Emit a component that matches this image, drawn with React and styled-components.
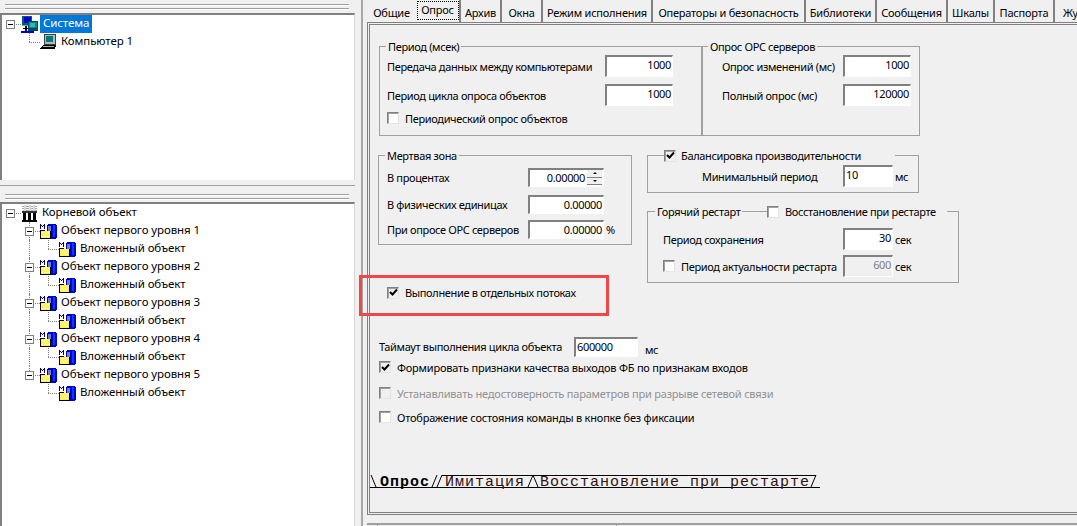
import React from 'react';
import styled, { createGlobalStyle } from 'styled-components';

const Global = createGlobalStyle`
  html, body { margin: 0; padding: 0; background: #f0f0f0; }
  body { font-family: "Noto Sans", "Liberation Sans", sans-serif; font-size: 11px; letter-spacing: -0.35px; color: #000; }
  * { box-sizing: border-box; }
`;

const Window = styled.div`
  display: flex;
  width: 1077px;
  height: 526px;
  overflow: hidden;
  background: #f0f0f0;
`;
const LeftColumn = styled.div`
  display: flex;
  flex-direction: column;
  width: 357px;
  flex: none;
  padding-right: 2px;
`;
const Grip = styled.div`
  height: ${p => p.$h}px;
  flex: none;
  padding: ${p => p.$top}px 6px 0 5px;
  &::before, &::after {
    content: '';
    display: block;
    height: 2px;
    margin-bottom: 2px;
    background: linear-gradient(#a0a0a0 50%, #fff 50%);
  }
`;
const TreePanel = styled.div`
  height: ${p => p.$h}px;
  flex: none;
  background: #fff;
  border-top: 2px solid #808080;
  border-left: 2px solid #808080;
  border-right: 1px solid #d8d8d8;
  overflow: hidden;
`;
const Splitter = styled.div`
  height: 6px;
  flex: none;
  border-bottom: 1px solid #a0a0a0;
`;
const TreeRow = styled.div`
  display: flex;
  align-items: center;
  height: 18px;
  margin-left: -1px;
  font-size: 11.5px;
  letter-spacing: -0.1px;
  white-space: nowrap;
`;
const Cell = styled.span`
  position: relative;
  width: 19px;
  height: 18px;
  flex: none;
  &::before {
    content: '';
    display: ${p => (p.$up || p.$down ? 'block' : 'none')};
    position: absolute;
    left: 9px;
    top: ${p => (p.$up ? 0 : 9)}px;
    bottom: ${p => (p.$down ? 0 : 9)}px;
    border-left: 1px dotted #808080;
  }
  &::after {
    content: '';
    display: ${p => (p.$right ? 'block' : 'none')};
    position: absolute;
    left: 9px;
    right: -1px;
    top: 9px;
    border-top: 1px dotted #808080;
  }
`;
const Toggle = styled.span`
  position: absolute;
  z-index: 1;
  left: 5px;
  top: 5px;
  width: 9px;
  height: 9px;
  background: #fff;
  border: 1px solid #808080;
  &::after {
    content: '';
    position: absolute;
    left: 1px;
    top: 3px;
    width: 5px;
    height: 1px;
    background: #000;
  }
`;
const TreeIcon = styled.svg`
  width: 17px;
  height: 17px;
  flex: none;
  margin-left: 1px;
  shape-rendering: crispEdges;
`;
const TreeLabel = styled.span`
  margin-left: ${p => (p.$selected ? 2 : 4)}px;
  padding: ${p => (p.$selected ? '0 3px' : '0')};
  height: 18px;
  line-height: 16px;
  color: ${p => (p.$selected ? '#fff' : '#000')};
  background: ${p => (p.$selected ? '#0078d7' : 'transparent')};
`;

const RightColumn = styled.div`
  display: flex;
  flex-direction: column;
  flex: 1;
  min-width: 0;
  margin-left: 4px;
  padding-left: 4px;
  border-left: 2px solid #a8a8a8;
`;
const TabRow = styled.div`
  display: flex;
  height: 22px;
  flex: none;
  letter-spacing: -0.22px;
`;
const Tab = styled.div`
  position: relative;
  display: flex;
  align-items: center;
  justify-content: center;
  flex: none;
  width: ${p => p.$w}px;
  height: 22px;
  padding-top: ${p => (p.$active ? 0 : 2)}px;
  padding-bottom: ${p => (p.$active ? 3 : 0)}px;
  white-space: nowrap;
  border-right: ${p => (p.$plain ? 'none' : '2px solid #808080')};
`;
const Focus = styled.span`
  position: absolute;
  left: 1px;
  right: 0;
  top: 1px;
  bottom: 2px;
  border: 1px dotted #000;
`;
const Frame = styled.div`
  width: 730px;
  height: 493px;
  flex: none;
  border: 3px double #808080;
`;
const TopGroups = styled.div`
  display: flex;
  margin: 21px 0 0 9px;
`;
const Group = styled.div`
  position: relative;
  flex: none;
  width: ${p => p.$w}px;
  height: ${p => p.$h}px;
  margin-top: ${p => p.$mt || 0}px;
  margin-left: ${p => p.$ml || 0}px;
  padding: ${p => p.$pt}px 0 0 ${p => p.$pl}px;
  border: 1px solid #a0a0a0;
`;
const Legend = styled.div`
  position: absolute;
  top: -8px;
  left: ${p => p.$l}px;
  width: ${p => (p.$w ? `${p.$w}px` : 'auto')};
  height: 15px;
  display: flex;
  align-items: center;
  gap: ${p => p.$gap ?? 6}px;
  padding: 0 ${p => p.$pad ?? 2}px;
  background: #f0f0f0;
  white-space: nowrap;
`;
const FieldRow = styled.div`
  display: flex;
  align-items: center;
  height: ${p => p.$h}px;
  margin-bottom: ${p => p.$mb || 0}px;
  white-space: nowrap;
`;
const Label = styled.span`
  flex: none;
  width: ${p => (p.$w ? `${p.$w}px` : 'auto')};
  margin-left: ${p => p.$ml || 0}px;
  padding-top: ${p => p.$pt || 0}px;
`;
const Field = styled.div`
  display: flex;
  justify-content: ${p => (p.$left ? 'flex-start' : 'flex-end')};
  align-items: flex-start;
  flex: none;
  width: ${p => p.$w}px;
  height: ${p => p.$h}px;
  padding: 0 ${p => (p.$left ? 0 : 1)}px 0 ${p => (p.$left ? 1 : 0)}px;
  line-height: 15px;
  color: ${p => (p.$disabled ? '#808080' : '#000')};
  background: ${p => (p.$disabled ? '#f0f0f0' : '#fff')};
  border-top: 2px solid #808080;
  border-left: 2px solid #808080;
  border-right: 1px solid #fff;
  border-bottom: 1px solid #fff;
`;
const Spin = styled.span`
  display: flex;
  flex-direction: column;
  flex: none;
  width: 16px;
  height: 15px;
  margin-left: 1px;
  border-left: 1px solid #fff;
`;
const SpinButton = styled.span`
  display: flex;
  align-items: center;
  justify-content: center;
  flex: 1;
  background: #f0f0f0;
  border-bottom: 1px solid #808080;
  &::after {
    content: '';
    border-left: 2px solid transparent;
    border-right: 2px solid transparent;
    ${p => (p.$up ? 'border-bottom: 2px solid #000;' : 'border-top: 2px solid #000;')}
  }
`;
const Unit = styled.span`
  margin-left: ${p => p.$ml ?? 2}px;
`;
const CheckBox = styled.span`
  display: flex;
  align-items: center;
  justify-content: center;
  flex: none;
  width: 12px;
  height: 12px;
  background: ${p => (p.$disabled ? '#f0f0f0' : '#fff')};
  border-top: 1px solid #808080;
  border-left: 1px solid #808080;
  border-right: 1px solid #e4e4e4;
  border-bottom: 1px solid #e4e4e4;
  box-shadow: inset 1px 1px 0 #a0a0a0;
`;
const CheckRow = styled.div`
  display: flex;
  align-items: center;
  gap: 6px;
  height: 14px;
  margin-top: ${p => p.$mt || 0}px;
  margin-left: ${p => p.$ml || 0}px;
  white-space: nowrap;
  color: ${p => (p.$disabled ? '#909090' : '#000')};
`;
const OptionRow = styled(CheckRow)`
  letter-spacing: -0.2px;
`;
const MidRow = styled.div`
  display: flex;
  height: 161px;
  margin: 19px 0 0 8px;
`;
const MidLeft = styled.div`
  width: 254px;
  flex: none;
`;
const MidRight = styled.div`
  margin-left: 15px;
  flex: none;
`;
const Highlight = styled.div`
  display: flex;
  align-items: center;
  gap: 6px;
  width: 250px;
  height: 41px;
  margin: 30px 0 0 -19px;
  padding: 0 0 6px 25px;
  border: 3px solid #f04848;
  white-space: nowrap;
`;
const TimeoutRow = styled.div`
  display: flex;
  align-items: flex-start;
  height: 20px;
  margin: 21px 0 0 9px;
  white-space: nowrap;
`;
const LowUnit = styled.span`
  margin: 6px 0 0 7px;
  line-height: 14px;
`;
const SheetBar = styled.div`
  display: flex;
  align-items: stretch;
  width: 450px;
  height: 13px;
  margin-top: ${p => p.$mt}px;
  font-family: "Liberation Mono", monospace;
  font-size: 15px;
  letter-spacing: 1px;
  white-space: nowrap;
  border-bottom: 1px solid #000;
`;
const SheetTab = styled.span`
  display: block;
  line-height: 13px;
  font-weight: ${p => (p.$active ? 700 : 400)};
  color: ${p => (p.$active ? '#000' : '#301010')};
  border-top: ${p => (p.$active ? '1px solid transparent' : '1px solid #000')};
`;
const Slant = styled.svg`
  width: ${p => p.$w}px;
  height: 12px;
  flex: none;
  overflow: visible;
`;
const StatusBar = styled.div`
  display: flex;
  height: 5px;
  margin-top: 8px;
  flex: none;
  border-top: 2px solid #a0a0a0;
`;
const StatusPane = styled.div`
  width: ${p => p.$w}px;
  flex: none;
  border-right: 1px solid #a0a0a0;
`;

const Check = () => (
  <svg width="9" height="9" viewBox="0 0 9 9"><path d="M1 4l2.5 2.5L8 1.5" fill="none" stroke="#000" strokeWidth="2" /></svg>
);

const SystemIcon = () => (
  <TreeIcon viewBox="0 0 17 17">
    <rect x="1" y="0" width="10" height="9" fill="#006070" />
    <rect x="3" y="1" width="7" height="6" fill="#0000d0" />
    <rect x="1" y="9" width="9" height="1" fill="#80a0a0" />
    <rect x="7" y="5" width="10" height="10" fill="#004860" />
    <rect x="8" y="6" width="8" height="6" fill="#008888" />
    <rect x="9" y="7" width="5" height="4" fill="#30b8a8" />
    <rect x="4" y="10" width="2" height="5" fill="#000080" />
    <rect x="0" y="15" width="13" height="2" fill="#0000c0" />
    <rect x="2" y="12" width="5" height="1" fill="#000" />
  </TreeIcon>
);
const ComputerIcon = () => (
  <TreeIcon viewBox="0 0 17 17">
    <rect x="4" y="0" width="12" height="11" fill="#404040" />
    <rect x="5" y="1" width="10" height="9" fill="#b8b8b8" />
    <rect x="6" y="2" width="7" height="6" fill="#007878" />
    <path d="M3 11h13l-1 4H0z" fill="#000" />
    <path d="M3 12h11l-.5 1H2z" fill="#b0b0b0" />
  </TreeIcon>
);
const RootIcon = () => (
  <TreeIcon viewBox="0 0 17 17">
    <path d="M1 1h15v1H1zM1 3h15v1H1zM2 5h14v1H2z" fill="#a8a8a8" />
    <path d="M3 0h2v6H3zM8 0h2v6H8zM12 0h2v6h-2z" fill="#d8d8d8" />
    <rect x="1" y="6" width="15" height="2" fill="#303030" />
    <rect x="2" y="8" width="3" height="7" fill="#000" />
    <rect x="7" y="8" width="3" height="7" fill="#000" />
    <rect x="12" y="8" width="3" height="7" fill="#000" />
    <rect x="1" y="15" width="15" height="2" fill="#000" />
  </TreeIcon>
);
const ObjectIcon = () => (
  <TreeIcon viewBox="0 0 17 17">
    <path d="M0 1h1v5H0zM4 1h1v5H4zM1 2h1v1H1zM3 2h1v1H3zM2 3h1v1H2z" fill="#000080" />
    <rect x="7" y="1" width="10" height="15" rx="3" fill="#0000d0" />
    <rect x="8" y="3" width="3" height="11" fill="#7080c0" />
    <rect x="13" y="2" width="2" height="12" fill="#0040ff" />
    <path d="M0 7h5v1h6v8H0z" fill="#000" />
    <rect x="1" y="8" width="9" height="7" fill="#fff25a" />
    <path d="M2 9h1v1H2zM4 9h1v1H4zM6 9h1v1H6zM8 9h1v1H8zM3 11h1v1H3zM5 11h1v1H5zM7 11h1v1H7zM2 13h1v1H2zM4 13h1v1H4zM6 13h1v1H6zM8 13h1v1H8z" fill="#fffcc0" />
  </TreeIcon>
);

const TreeItem = ({ cells, icon, children, selected }) => (
  <TreeRow>
    {cells}
    {icon}
    <TreeLabel $selected={selected}>{children}</TreeLabel>
  </TreeRow>
);

const levels = [1, 2, 3, 4, 5];

const tabs = [
  ['Общие', 49], ['Опрос', 45, true], ['Архив', 41], ['Окна', 41], ['Режим исполнения', 110],
  ['Операторы и безопасность', 153], ['Библиотеки', 71], ['Сообщения', 71], ['Шкалы', 47],
  ['Паспорта', 60], ['Журнал', 56],
];

export default function App() {
  return (
    <Window>
      <Global />
      <LeftColumn>
        <Grip $h={13} $top={4} />
        <TreePanel $h={167}>
          <TreeItem selected icon={<SystemIcon />} cells={<Cell $right><Toggle /></Cell>}>Система</TreeItem>
          <TreeItem icon={<ComputerIcon />} cells={<><Cell /><Cell $up $right /></>}>Компьютер 1</TreeItem>
        </TreePanel>
        <Splitter />
        <Grip $h={16} $top={8} />
        <TreePanel $h={326}>
          <TreeItem icon={<RootIcon />} cells={<Cell $right><Toggle /></Cell>}>Корневой объект</TreeItem>
          {levels.map(n => (
            <React.Fragment key={n}>
              <TreeItem icon={<ObjectIcon />} cells={<><Cell /><Cell $up $down={n < 5} $right><Toggle /></Cell></>}>
                Объект первого уровня {n}
              </TreeItem>
              <TreeItem icon={<ObjectIcon />} cells={<><Cell /><Cell $up={n < 5} $down={n < 5} /><Cell $up $right /></>}>
                Вложенный объект
              </TreeItem>
            </React.Fragment>
          ))}
        </TreePanel>
      </LeftColumn>
      <RightColumn>
        <TabRow>
          {tabs.map(([name, w, active], i) => (
            <Tab key={name} $w={w} $active={active} $plain={i === 0 || i === tabs.length - 1}>
              {active && <Focus />}
              {name}
            </Tab>
          ))}
        </TabRow>
        <Frame>
          <TopGroups>
            <Group $w={323} $h={90} $pt={8} $pl={7}>
              <Legend $l={6}>Период (мсек)</Legend>
              <FieldRow $h={22} $mb={7}><Label $w={218}>Передача данных между компьютерами</Label><Field $w={68} $h={22}>1000</Field></FieldRow>
              <FieldRow $h={22} $mb={5}><Label $w={218}>Период цикла опроса объектов</Label><Field $w={68} $h={22}>1000</Field></FieldRow>
              <CheckRow><CheckBox />Периодический опрос объектов</CheckRow>
            </Group>
            <Group $w={218} $h={90} $pt={8} $pl={19}>
              <Legend $l={5}>Опрос OPC серверов</Legend>
              <FieldRow $h={22} $mb={7}><Label $w={121}>Опрос изменений (мс)</Label><Field $w={68} $h={22}>1000</Field></FieldRow>
              <FieldRow $h={22}><Label $w={121}>Полный опрос (мс)</Label><Field $w={68} $h={22}>120000</Field></FieldRow>
            </Group>
          </TopGroups>
          <MidRow>
            <MidLeft>
              <Group $w={254} $h={90} $pt={12} $pl={8}>
                <Legend $l={6}>Мертвая зона</Legend>
                <FieldRow $h={19} $mb={8}><Label $w={141}>В процентах</Label><Field $w={76} $h={19}>0.00000<Spin><SpinButton $up /><SpinButton /></Spin></Field></FieldRow>
                <FieldRow $h={19} $mb={6}><Label $w={141}>В физических единицах</Label><Field $w={76} $h={19}>0.00000</Field></FieldRow>
                <FieldRow $h={19}><Label $w={141}>При опросе OPC серверов</Label><Field $w={76} $h={19}>0.00000</Field><Unit>%</Unit></FieldRow>
              </Group>
              <Highlight><CheckBox $disabled><Check /></CheckBox>Выполнение в отдельных потоках</Highlight>
            </MidLeft>
            <MidRight>
              <Group $w={272} $h={38} $pt={9} $pl={54}>
                <Legend $l={16} $w={231} $pad={0} $gap={5}><CheckBox $disabled><Check /></CheckBox>Балансировка производительности</Legend>
                <FieldRow $h={22}><Label $w={141}>Минимальный период</Label><Field $left $w={50} $h={22}>10</Field><Unit>мс</Unit></FieldRow>
              </Group>
              <Group $w={312} $h={72} $mt={18} $pt={16} $pl={15}>
                <Legend $l={7}>Горячий рестарт</Legend>
                <Legend $l={119} $w={180} $pad={0}><CheckBox />Восстановление при рестарте</Legend>
                <FieldRow $h={22} $mb={5}><Label $w={180}>Период сохранения</Label><Field $w={50} $h={22}>30</Field><Unit>сек</Unit></FieldRow>
                <FieldRow $h={22}>
                  <CheckBox /><Label $w={162} $ml={6}>Период актуальности рестарта</Label>
                  <Field $disabled $w={50} $h={22}>600</Field><Unit>сек</Unit>
                </FieldRow>
              </Group>
            </MidRight>
          </MidRow>
          <TimeoutRow>
            <Label $w={195} $pt={2}>Таймаут выполнения цикла объекта</Label>
            <Field $left $w={64} $h={20}>600000</Field>
            <LowUnit>мс</LowUnit>
          </TimeoutRow>
          <OptionRow $ml={9} $mt={3}><CheckBox $disabled><Check /></CheckBox>Формировать признаки качества выходов ФБ по признакам входов</OptionRow>
          <OptionRow $ml={9} $mt={12} $disabled><CheckBox $disabled />Устанавливать недостоверность параметров при разрыве сетевой связи</OptionRow>
          <OptionRow $ml={9} $mt={10}><CheckBox />Отображение состояния команды в кнопке без фиксации</OptionRow>
          <SheetBar $mt={51}>
            <Slant $w={10} viewBox="0 0 10 12"><path d="M1 0l5 12" stroke="#000" fill="none" /></Slant>
            <SheetTab $active>Опрос</SheetTab>
            <Slant $w={15} viewBox="0 0 15 12"><path d="M2 12l5-12M7 12l5-12M12 .5h3" stroke="#000" fill="none" /></Slant>
            <SheetTab>Имитация</SheetTab>
            <Slant $w={15} viewBox="0 0 15 12"><path d="M3 12l5-12M8 0l5 12M0 .5h15" stroke="#000" fill="none" /></Slant>
            <SheetTab>Восстановление при рестарте</SheetTab>
            <Slant $w={10} viewBox="0 0 10 12"><path d="M1 12l5-12M0 .5h6" stroke="#000" fill="none" /></Slant>
          </SheetBar>
        </Frame>
        <StatusBar><StatusPane $w={11} /><StatusPane $w={239} /></StatusBar>
      </RightColumn>
    </Window>
  );
}
